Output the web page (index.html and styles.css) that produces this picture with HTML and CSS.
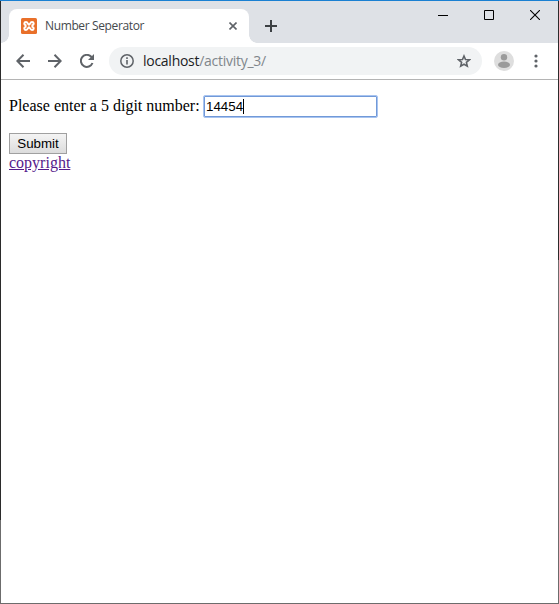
FILE: index.html
```
<!DOCTYPE html>
<html lang="en">
<head>
<meta charset="utf-8">
<title>Number Seperator</title>
<link rel="stylesheet" href="styles.css">
</head>
<body>
<div class="window">
  <header class="tabstrip">
    <div class="tab">
      <svg class="favicon" width="16" height="16" viewBox="0 0 16 16"><rect width="16" height="16" rx="1.5" fill="#e9702a"/><path d="M5 4C3 4 2.600 6.500 4.600 7.200V8.800C2.600 9.500 3 12 5 12C7 12 6.800 9.300 8 9.300S9 12 11 12C13 12 13.400 9.500 11.400 8.800V7.200C13.400 6.500 13 4 11 4C9 4 9.200 6.700 8 6.700S7 4 5 4Z" fill="none" stroke="#fff" stroke-width="2"/></svg>
      <span class="tab-title">Number Seperator</span>
      <svg class="tab-close" width="8" height="8" viewBox="0 0 8 8"><path d="M.5.5l7 7M7.500.5l-7 7" stroke="#5f6368" stroke-width="1.600"/></svg>
    </div>
    <svg class="new-tab" width="12" height="12" viewBox="0 0 12 12"><path d="M6 0v12M0 6h12" stroke="#3c4043" stroke-width="2"/></svg>
    <div class="controls">
      <svg width="10" height="10" viewBox="0 0 10 10"><path d="M0 5.500h10" stroke="#000"/></svg>
      <svg width="10" height="10" viewBox="0 0 10 10"><path d="M.5.5h9v9h-9z" fill="none" stroke="#000"/></svg>
      <svg width="10" height="10" viewBox="0 0 10 10"><path d="M0 0l10 10M10 0L0 10" stroke="#000" stroke-width="1.100"/></svg>
    </div>
  </header>
  <nav class="toolbar">
    <svg class="nav-icon" width="14" height="14" viewBox="0 0 14 14"><path d="M14 7H1.500M7.500.800L1.300 7l6.200 6.200" /></svg>
    <svg class="nav-icon" width="14" height="14" viewBox="0 0 14 14"><path d="M0 7h12.500M6.500.800L12.700 7l-6.200 6.200" /></svg>
    <svg class="nav-icon" width="14" height="14" viewBox="0 0 14 14"><path d="M12.500 9A6 6 0 1 1 11.300 2.800L13 4.500"/><path class="solid" d="M14 0v6H8z"/></svg>
    <div class="omnibox">
      <svg width="14" height="14" viewBox="0 0 14 14"><circle cx="7" cy="7" r="6.200" fill="none" stroke="#5f6368" stroke-width="1.500"/><path d="M7 3.300v1.600M7 6v4.600" stroke="#5f6368" stroke-width="1.600"/></svg>
      <span class="url">localhost<span class="path">/activity_3/</span></span>
      <svg class="star" width="14" height="14" viewBox="0 0 14 14"><path d="M7 2l1.500 3.500 3.900.3-3 2.600.9 3.800L7 10.200l-3.300 2 .9-3.800-3-2.600 3.900-.3z" fill="none" stroke="#5f6368" stroke-width="1.600"/></svg>
    </div>
    <svg class="avatar" width="20" height="20" viewBox="0 0 20 20"><circle cx="10" cy="10" r="10" fill="#dedede"/><circle cx="10" cy="6.200" r="3.200" fill="#9b9b9b"/><ellipse cx="10" cy="13.800" rx="6" ry="3.200" fill="#9b9b9b"/></svg>
    <svg class="menu" width="4" height="14" viewBox="0 0 4 14"><g fill="#5f6368"><circle cx="2" cy="2" r="1.600"/><circle cx="2" cy="7" r="1.600"/><circle cx="2" cy="12" r="1.600"/></g></svg>
  </nav>
  <main class="page">
    <form>
      <label class="field"><span class="prompt">Please enter a 5 digit number:</span><span class="input">14454<i class="caret"></i></span></label>
      <button class="submit" type="button">Submit</button>
    </form>
    <a class="copyright" href="#">copyright</a>
  </main>
</div>
</body>
</html>
```
FILE: styles.css
```
* { box-sizing: border-box; }
body { margin: 0; overflow: hidden; background: linear-gradient(to right, #2b2b2b 50%, transparent 50%) top left / 100% 520px no-repeat, linear-gradient(#2b2b2b, #2b2b2b) top right / 1px 260px no-repeat, #6c6c6c; }
svg { display: block; flex: none; }
.window { height: 604px; padding: 0 1px 1px; display: flex; flex-direction: column; border-top: 1px solid #1a80d2; }
.tabstrip { height: 42px; flex: none; display: flex; align-items: flex-start; background: #dee1e6; padding: 8px 18px 0 8px; }
.tab { position: relative; width: 240px; height: 34px; display: flex; align-items: center; padding: 0 12px; background: #fff; border-radius: 8px 8px 0 0; font: 12px "Open Sans", sans-serif; color: #45494d; }
.tab::before, .tab::after { content: ""; position: absolute; bottom: 0; width: 8px; height: 8px; }
.tab::before { left: -8px; background: radial-gradient(circle at 0 0, transparent 7.500px, #fff 8px); }
.tab::after { right: -8px; background: radial-gradient(circle at 100% 0, transparent 7.500px, #fff 8px); }
.tab-title { margin-left: 8px; padding-bottom: 1px; white-space: nowrap; letter-spacing: -.37px; }
.tab-close { margin-left: auto; }
.new-tab { margin: 11px 0 0 16px; }
.controls { margin: 1px 0 0 auto; display: flex; gap: 36px; }
.toolbar { height: 37px; flex: none; display: flex; align-items: center; background: #fff; border-bottom: 1px solid #b4b4b4; padding-left: 15px; }
.nav-icon { margin-right: 18px; fill: none; stroke: #5f6368; stroke-width: 2; }
.nav-icon .solid { fill: #5f6368; stroke: none; }
.omnibox { margin-left: -3px; width: 373px; height: 28px; display: flex; align-items: center; border-radius: 14px; background: #f1f3f4; padding: 0 11px; }
.url { margin-left: 9px; padding-bottom: 1px; font: 14px "Open Sans", sans-serif; letter-spacing: -.27px; color: #202124; white-space: nowrap; }
.path { color: #80868b; }
.star { margin-left: auto; }
.avatar { margin-left: 12px; }
.menu { margin-left: 20px; }
.page { flex: 1; background: #fff; padding: 15px 8px; font: 16px/18px "Liberation Serif", serif; color: #000; }
.field { display: flex; align-items: center; height: 23px; }
.prompt { width: 194px; padding-bottom: 2px; white-space: nowrap; }
.input { width: 175px; height: 23px; display: flex; align-items: center; border: 1px solid #a8c4f0; box-shadow: inset 0 0 0 1px #7199d8; border-radius: 2px; padding-left: 2px; font: 13.333px "Liberation Sans", sans-serif; }
.caret { width: 1px; height: 15px; background: #000; }
.submit { display: block; margin-top: 15px; width: 58px; height: 21px; padding: 0; border: 1px solid #a0a0a0; border-radius: 0; background: linear-gradient(#f4f4f4, #dcdcdc); font: 13.333px "Liberation Sans", sans-serif; color: #000; }
.copyright { display: block; width: max-content; color: #551a8b; text-decoration: underline; }
```
